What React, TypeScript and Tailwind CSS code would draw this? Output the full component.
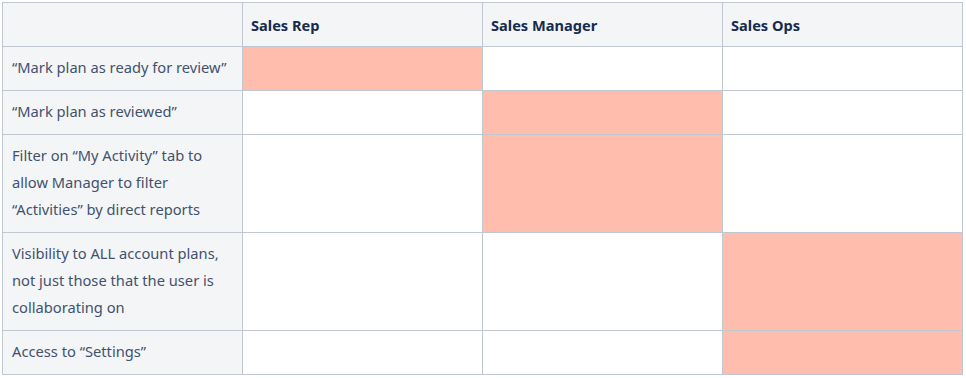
import React from "react";

const rows: { label: React.ReactNode; on: number }[] = [
  { label: "“Mark plan as ready for review”", on: 0 },
  { label: "“Mark plan as reviewed”", on: 1 },
  { label: <>Filter on “My Activity” tab to<br />allow Manager to filter<br />“Activities” by direct reports</>, on: 1 },
  { label: <>Visibility to ALL account plans,<br />not just those that the user is<br />collaborating on</>, on: 2 },
  { label: "Access to “Settings”", on: 2 },
];

export default function App() {
  return (
    <div className="w-[966px] h-[378px] bg-white pt-[2px] pl-[2px]" style={{ fontFamily: '"Noto Sans", "Open Sans", sans-serif' }}>
      <table className="border-collapse table-fixed w-[960px] text-[14.7px] leading-[27px]">
        <colgroup>
          <col className="w-[240px]" />
          <col className="w-[240px]" />
          <col className="w-[240px]" />
          <col className="w-[240px]" />
        </colgroup>
        <thead>
          <tr className="h-[44px]">
            <th className="border border-[#c1c7d0] bg-[#f4f5f7]"></th>
            {["Sales Rep", "Sales Manager", "Sales Ops"].map((h) => (
              <th key={h} className="border border-[#c1c7d0] bg-[#f4f5f7] text-left font-bold text-[14.6px] text-[#172b4d] px-[8px] pt-[9px] pb-[7px] align-middle">
                {h}
              </th>
            ))}
          </tr>
        </thead>
        <tbody>
          {rows.map((r, i) => (
            <tr key={i}>
              <td className="border border-[#c1c7d0] bg-[#f4f5f7] text-[#42526e] px-[9px] pt-[7px] pb-[9px] align-top whitespace-nowrap">
                {r.label}
              </td>
              {[0, 1, 2].map((c) => (
                <td key={c} className={`border border-[#c1c7d0] ${r.on === c ? "bg-[#ffbdad]" : "bg-white"}`}></td>
              ))}
            </tr>
          ))}
        </tbody>
      </table>
    </div>
  );
}
